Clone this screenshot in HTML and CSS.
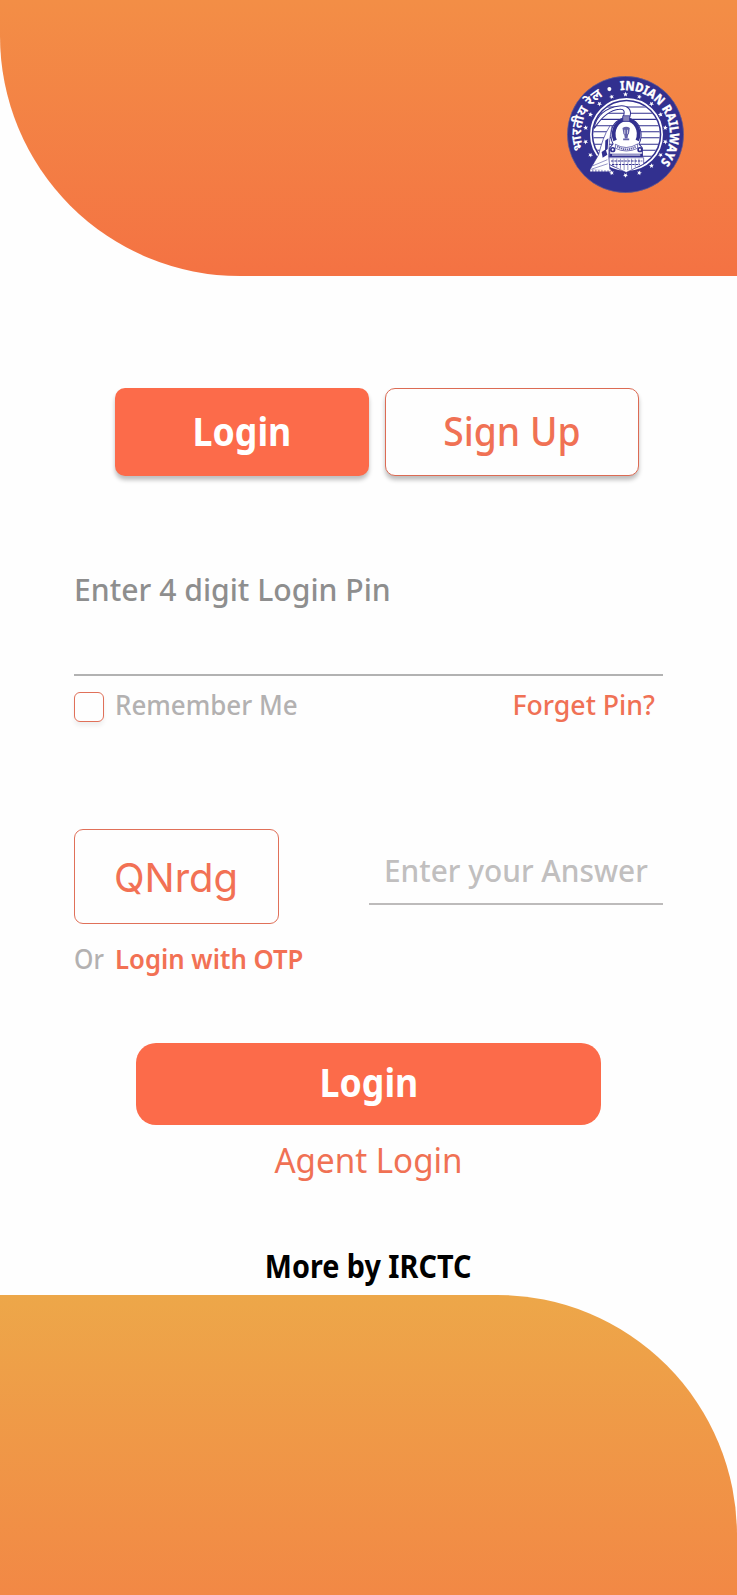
FILE: index.html
```html
<!DOCTYPE html>
<html lang="en">
<head>
<meta charset="utf-8">
<title>Indian Railways Login</title>
<link rel="stylesheet" href="styles.css">
</head>
<body>
<main class="screen">
  <header class="hero">
    <svg class="logo" viewBox="36 36 348 348" role="img" aria-label="Indian Railways">
      <defs>
        <path id="arc" d="M210 342A132 132 0 0 1 210 78A132 132 0 0 1 210 342"/>
        <path id="star" d="M210 83l2 5 5.400.3-4.200 3.400 1.400 5.300-4.600-3-4.600 3 1.400-5.300-4.200-3.400 5.400-.3z"/>
        <clipPath id="disc"><circle cx="213" cy="210" r="99"/></clipPath>
      </defs>
      <circle cx="210" cy="210" r="173" fill="#32308f" stroke="#6e628d" stroke-width="2"/>
      <g fill="#fff">
        <use href="#star"/>
        <use href="#star" transform="rotate(20 210 211)"/>
        <use href="#star" transform="rotate(40 210 211)"/>
        <use href="#star" transform="rotate(60 210 211)"/>
        <use href="#star" transform="rotate(80 210 211)"/>
        <use href="#star" transform="rotate(100 210 211)"/>
        <use href="#star" transform="rotate(120 210 211)"/>
        <use href="#star" transform="rotate(140 210 211)"/>
        <use href="#star" transform="rotate(160 210 211)"/>
        <use href="#star" transform="rotate(180 210 211)"/>
        <use href="#star" transform="rotate(200 210 211)"/>
        <use href="#star" transform="rotate(240 210 211)"/>
        <use href="#star" transform="rotate(260 210 211)"/>
        <use href="#star" transform="rotate(280 210 211)"/>
        <use href="#star" transform="rotate(300 210 211)"/>
        <use href="#star" transform="rotate(320 210 211)"/>
        <use href="#star" transform="rotate(340 210 211)"/>
        <circle cx="162" cy="75" r="6"/>
      </g>
      <circle cx="213" cy="210" r="106" fill="none" stroke="#fff" stroke-width="5"/>
      <circle cx="213" cy="210" r="99" fill="#fff"/>
      <g clip-path="url(#disc)">
        <path d="M110 128H320M110 147H320M110 165H320M110 184H320M110 202H320M110 220H320M110 239H320M110 257H320M110 275H320" stroke="#32308f" stroke-width="3"/>
      </g>
      <!-- smoke plume -->
      <path d="M202 160c8-18 4-27-10-25c-28 2-52 22-75 57c4-38 37-63 75-67c25-3 38 12 31 33z" fill="#fff" stroke="#32308f" stroke-width="3"/>
      <!-- boiler -->
      <path d="M173 238a45 51 0 1 1 77 0l10 12v25H163v-25z" fill="#fff" stroke="#32308f" stroke-width="3"/>
      <path d="M179 228a37 43 0 1 1 66 0" fill="none" stroke="#32308f" stroke-width="11"/>
      <circle cx="212" cy="204" r="27" fill="#fff"/>
      <path d="M202 154h20v17h-20z" fill="#8682b9" stroke="#32308f" stroke-width="2"/>
      <!-- lion capital -->
      <path d="M201 191q11-8 22 0l-3 18h-16zM206 209h12l-2 12h-8zM203 222h18v5h-18z" fill="#6461a8"/>
      <path d="M208 196v12M216 196v12" stroke="#fff" stroke-width="2"/>
      <path d="M180 239q32 20 66-1v13q-34 16-66 0z" fill="#fff" stroke="#32308f" stroke-width="2"/>
      <path d="M185 246q28 16 56 0" fill="none" stroke="#6461a8" stroke-width="5" stroke-dasharray="4 2"/>
      <circle cx="172" cy="255" r="8" fill="#32308f"/><circle cx="253" cy="255" r="8" fill="#32308f"/>
      <circle cx="172" cy="255" r="3" fill="#fff"/><circle cx="253" cy="255" r="3" fill="#fff"/>
      <path d="M164 267h97v9h-97z" fill="#32308f"/><path d="M170 271h84" stroke="#fff" stroke-width="3"/>
      <!-- cow catcher -->
      <path d="M160 279H264V298L212 323L160 298z" fill="#fff" stroke="#32308f" stroke-width="2"/>
      <path d="M167 289H260M170 299H252" stroke="#32308f" stroke-width="3" stroke-dasharray="7 3"/>
      <path d="M173 282v22M184 282v26M195 282v30M206 282v34M217 282v34M228 282v31M239 282v26M250 282v20" stroke="#32308f" stroke-width="1.500"/>
      <!-- express train -->
      <path d="M164 184c-17 25-26 55-34 86l-26 45 60 3-4-44c1-28 2-52 10-90z" fill="#fff" stroke="#32308f" stroke-width="2"/>
      <path d="M150 228l9-7-2 32-8 7zM139 262l12-8 5 16-14 9z" fill="#32308f"/>
      <path d="M113 303l43-18M109 313l48-16" stroke="#32308f" stroke-width="1.500"/>
      <path d="M105 317h62" stroke="#fff" stroke-width="6" stroke-dasharray="7 2"/>
      <text class="seal-latin"><textPath href="#arc" startOffset="399" textLength="312" lengthAdjust="spacingAndGlyphs">INDIAN RAILWAYS</textPath></text>
      <text class="seal-hindi"><textPath href="#arc" startOffset="161">भारतीय रेल</textPath></text>
    </svg>
  </header>

  <section class="content">
    <nav class="tabs">
      <button class="tab tab-active"><span class="tab-login">Login</span></button>
      <button class="tab tab-outline"><span class="tab-signup">Sign Up</span></button>
    </nav>
    <div class="pin-field"><span class="pin-label">Enter 4 digit Login Pin</span></div>
    <div class="options">
      <span class="checkbox"></span>
      <span class="remember">Remember Me</span>
      <a class="forgot">Forget Pin?</a>
    </div>
    <div class="challenge">
      <div class="captcha"><span class="captcha-code">QNrdg</span></div>
      <div class="answer"><span class="answer-hint">Enter your Answer</span></div>
    </div>
    <div class="alternative"><span class="or">Or</span><a class="otp">Login with OTP</a></div>
    <button class="submit"><span class="submit-text">Login</span></button>
    <div class="agent"><a class="agent-link">Agent Login</a></div>
    <div class="more"><span class="more-text">More by IRCTC</span></div>
  </section>
  <footer class="footer"></footer>
</main>
</body>
</html>
```
FILE: styles.css
```css
* { box-sizing: border-box; }
body { margin: 0; background: #fff; font-family: "Noto Sans", sans-serif; }
button { font-family: inherit; padding: 0; border: 0; }
span, a { white-space: nowrap; }

.screen { width: 737px; height: 1595px; display: flex; flex-direction: column; overflow: hidden; background: #fefefe; }
.hero { height: 275.5px; flex: none; padding: 76px 53px 0 0; display: flex; justify-content: flex-end; border-bottom-left-radius: 240px; background: linear-gradient(#f38e46, #f47243); }
.logo { width: 117px; height: 117px; }
.seal-latin { font: 800 38px "Noto Sans", sans-serif; fill: #fff; stroke: #fff; stroke-width: .8px; }
.seal-hindi { font: 700 41px "Noto Sans", "Noto Sans Devanagari", sans-serif; fill: #fff; }

.content { height: 1019px; flex: none; padding: 112px 74px 0; display: flex; flex-direction: column; }
.tabs { display: flex; gap: 16px; margin-left: 41px; height: 88px; }
.tab { width: 254px; height: 88px; border-radius: 10px; font-size: 39px; line-height: 81px; padding-bottom: 2px; box-shadow: 0 4px 4px rgba(0, 0, 0, .25); }
.tab-active { background: #fc6b4a; color: #fff; font-weight: 700; }
.tab-outline { background: #fefefe; color: #f07154; border: 1px solid #dc6b54; font-weight: 500; }
.tab-login, .submit-text { display: inline-block; transform: scaleX(.915); }
.tab-signup { display: inline-block; transform: scaleX(.955); }

.pin-field { height: 200px; padding-top: 89px; border-bottom: 2px solid #b2b2b2; }
.pin-label { display: block; font-size: 31.5px; line-height: 48px; transform: scaleX(.957); transform-origin: left; color: #8e8e8e; font-weight: 500; }
.options { height: 48px; display: flex; align-items: center; font-size: 27.5px; line-height: 36px; }
.checkbox { width: 30px; height: 30px; margin-top: 14px; border: 1px solid #e07059; border-radius: 6px; box-shadow: 0 4px 4px rgba(0, 0, 0, .06); }
.remember { margin: 11px 0 0 11px; transform: scaleX(.943); transform-origin: left; color: #b3b1b1; font-weight: 500; }
.forgot { margin: 11px 8px 0 auto; transform: scaleX(.97); transform-origin: right; color: #f07155; font-weight: 500; }

.challenge { margin-top: 105px; height: 95px; display: flex; justify-content: space-between; }
.captcha { width: 205px; height: 95px; padding-left: 39px; border: 1px solid #e07059; border-radius: 9px; }
.captcha-code { font: 400 40px/95px Inter, sans-serif; color: #f27154; }
.answer { width: 294px; height: 76px; padding: 18px 0 0 15px; border-bottom: 2px solid #bdbbbb; }
.answer-hint { display: block; font-size: 30.5px; line-height: 47px; transform: scaleX(.978); transform-origin: left; color: #c1bfbf; font-weight: 500; }
.alternative { height: 48px; margin-top: 11px; display: flex; font-size: 27.5px; line-height: 48px; }
.or { width: 41px; transform: scaleX(.9); transform-origin: left; color: #b3b1b1; font-weight: 500; }
.otp { transform: scaleX(.935); transform-origin: left; color: #f27154; font-weight: 600; }
.submit { width: 465px; height: 82px; margin: 60px 0 0 62px; padding-bottom: 3px; border-radius: 20px; background: #fc6b4a; color: #fff; font-size: 39px; font-weight: 700; line-height: 76px; }
.agent { height: 60px; margin-top: 5px; text-align: center; font-size: 34px; line-height: 60px; color: #f07154; font-weight: 400; }
.agent-link { display: inline-block; transform: scaleX(.975); }
.more { margin-top: 52px; height: 50px; text-align: center; font-size: 31.5px; line-height: 48px; color: #000; font-weight: 700; }
.more-text { display: inline-block; transform: scaleX(.913); }
.footer { height: 301px; flex: none; border-top-right-radius: 240px; background: linear-gradient(#eda749, #f28845); }
```
